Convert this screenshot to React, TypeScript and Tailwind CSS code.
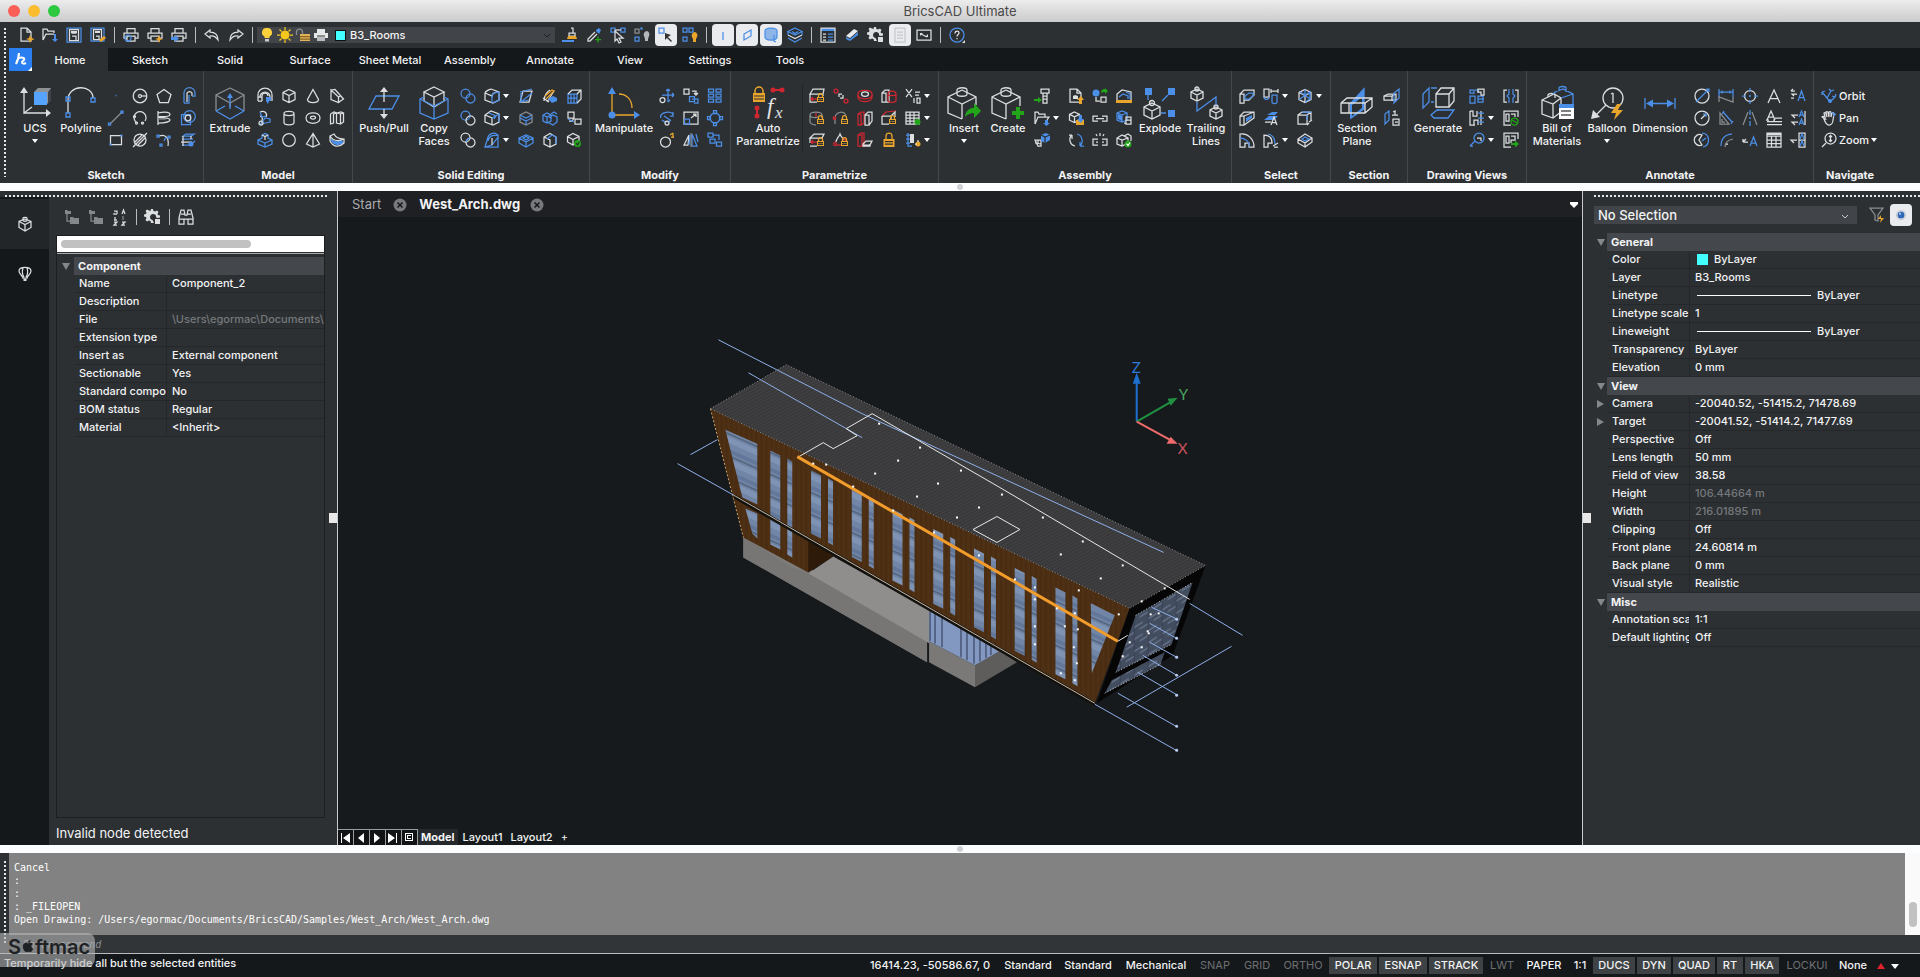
import React from 'react';
import { FaApple } from 'react-icons/fa';

type Shape = [color: string, d: string, fill?: boolean];

const W = '#dcdee0';
const B = '#4b8fe8';
const R = '#d02630';
const O = '#eaa62c';
const G = '#22a518';
const D = '#8b8e91';

const circ = (x: number, y: number, r: number) =>
  `M${x - r} ${y}a${r} ${r} 0 1 0 ${2 * r} 0a${r} ${r} 0 1 0 ${-2 * r} 0z`;
const rect = (x: number, y: number, w: number, h: number) => `M${x} ${y}h${w}v${h}h${-w}z`;

const CUBE = 'M8 1.5l6 3v7l-6 3-6-3v-7zM2 4.5l6 3 6-3M8 7.5v7';
const SMALL_CUBE = 'M6.500 2l5 2.400v5.800l-5 2.400-5-2.400V4.400zM1.500 4.400l5 2.400 5-2.400M6.500 6.800v5.800';
const PRINTER = 'M4 6V1.500h8V6M3.500 11H1V6h14v5h-2.500M4 9h8v5H4z';

const lock = (x: number, y: number): Shape[] => [
  [O, rect(x, y, 7, 5), true],
  [O, `M${x + 1.5} ${y}v-1.500a2 2 0 0 1 4 0v1.500`],
  ['#2d3033', `M${x + 1} ${y + 1.7}h5M${x + 1} ${y + 3.4}h5`],
];

const icons: Record<string, Shape[]> = {
  // sketch
  point: [['#3f5f95', circ(8, 7.5, 1), true]],
  line: [[D, 'M2 14L14 2'], [B, rect(0.5, 13, 2, 2)], [B, rect(13, 1, 2, 2)]],
  rectangle: [[W, 'M2.500 3.500h11v9h-11z'], [B, rect(12.5, 2.5, 2, 2), true], [B, rect(1.5, 11.5, 2, 2), true]],
  circle: [[W, circ(8, 8, 6.8)], [W, circ(8, 8, 1.5)], [W, 'M9.500 8H15']],
  arc: [[W, 'M4.500 12.500A6 6 0 1 1 13 11'], [W, circ(4.5, 13, 1)], [W, circ(10.5, 13, 1)], [W, circ(2.5, 6.5, 1)]],
  ellipse: [[W, circ(8, 8, 6)], [W, 'M1 15L15 1M3 10l7-7M6 13l7-7']],
  polygon: [[W, 'M8 1.500l7 5-2.700 8H3.700L1 6.500z']],
  helix: [[W, 'M2 1v14M2 3c9-2 12 0 12 1.500S11 7 4 6.500c-2 0-2 1 0 1 8 0 10 1 10 2.500S9 13 2 13'], [D, 'M2 9h8']],
  spline: [[W, 'M3 4c8-3 10 4 9 10'], [B, rect(1, 3, 2, 2)], [B, rect(4, 12, 2, 2)], [B, rect(12, 4, 2, 2)], [B, 'M8 9l2-4']],
  offset: [[W, 'M7 14V5a3 3 0 0 1 5 0v3'], [B, 'M4 15V5a5.500 5.500 0 0 1 11 0v3h-3M4 15h5V7']],
  boundary: [[B, 'M1.500 4.500h9v10h-9z'], [B, circ(9.5, 6.5, 5.8)], [W, circ(8, 8, 2.8)]],
  region: [[B, 'M3 4h8l3-2H6zM2 7h11M2 13h8l5-4'], [W, 'M3 4v10M11 4v3M1 10h11'], [B, circ(11, 12, 2.5), true]],
  // model
  revolve: [[W, 'M1 13V7a7 7 0 0 1 14 0v6M5 13V8a3 3 0 0 1 6 0M1 9h4M1 13h4'], [W, 'M3 9a5 5 0 0 1 10 0'], [B, 'M9 9h5v4h-2l-1 3-2-3z', true]],
  sweep: [[W, 'M3 2c4-2 8 1 6 5M3 6c3 0 3 3 1 8'], [B, 'M3 2l2 5 4-1M4 14l9-2V9L8 8z'], [W, circ(4, 13, 2)]],
  loft: [[B, 'M5 3l3-1.500L11 3v3l4 2v4l-7 3-7-3V8l4-2zM1 8l7 3 7-3M8 11v4'], [W, 'M5 3l3 1.500L11 3M8 4.500V8']],
  box: [[W, CUBE]],
  cylinder: [[W, 'M3 3.500v9c0 3 10 3 10 0v-9c0-2.700-10-2.700-10 0c0 2.700 10 2.700 10 0']],
  sphere: [[W, circ(8, 8, 6.3)]],
  cone: [[W, 'M8 1.500L2.500 11.500c0 4 11 4 11 0z']],
  torus: [[W, 'M1 8c0-7 14-7 14 0s-14 7-14 0z'], [W, 'M5.500 7.500c0-2 5-2 5 0s-5 2-5 0z']],
  pyramid: [[W, 'M8 1.500L1.500 12 8 15l6.500-3zM8 1.500V15']],
  wedge: [[W, 'M2 2v9.500l7.500 3V9zM2 2l4-.500L14.500 11l-5 3.500M9.500 9l2-1']],
  polysolid: [[W, 'M1.500 4v10l3-1V4l3-1v10l4 1V4l3-1v9l-3 2M1.500 4L5 2l3 1 4-1 2.500 1M11.500 4L8 3']],
  slab: [[B, 'M1 5c3 5 7 5 12 3l2 3c-5 3-10 3-13-2z', true], [W, 'M1 4l4-2c2 4 5 5 10 5v4c-5 5-11 4-14-2zM1 4c3 5 7 6 14 3']],
  // solid editing
  union: [[B, circ(5.5, 5.5, 4.5)], [B, circ(10.5, 10.5, 4.5)]],
  subtract: [[B, circ(5.5, 5.5, 4.5)], [W, circ(10.5, 10.5, 4.5)]],
  intersect: [[W, circ(5.5, 5.5, 4.5)], [W, circ(10.5, 10.5, 4.5)], [B, 'M6 10a5 5 0 0 1 4-4']],
  fillet: [[W, 'M1 5c0-1 4-4 6-4l8 3v8l-6 3-8-3zM1 5l7 3c0-3 4-4 7-4'], [B, 'M8 8v7M8 8c0-2 3-4 7-4v8l-6 3']],
  chamfer: [[W, 'M1 5l6-4 8 3v8l-6 3-8-3zM1 5l7 3v7'], [B, 'M5 3l7 3-2 3M8 8l7-4v8']],
  shell: [[B, 'M1 15L4 5c1-3 4-4 7-4l3 2v12H1zM4 9c1-5 4-6 10-6M1 15l7-2 6-8'], [W, 'M8 13V6']],
  taper: [[W, 'M2 14h9L14 3H5z'], [B, 'M2 4l12-3M3 5v9l11-9M2 14l9-2']],
  thicken: [[D, 'M2 5l6-3 6 3v7l-6 3-6-3z'], [B, 'M2 8l6 3 6-3M8 11v4M2 5l6 3 6-3']],
  imprint: [[B, 'M1 6l7-3 7 3v5l-7 4-7-4zM1 6l7 4 7-4M8 10v5'], [B, 'M5 6l3-1.500L11 6 8 8z']],
  slice: [[W, 'M2 13c0-6 4-10 6-11M5 14L12 3M1 10l6 4'], [O, 'M3 8l7-6 2 1-8 8'], [B, 'M6 11l5-3 4 2v3l-5 2z', true]],
  separate: [[B, 'M1 5l4-2 4 2v6l-4 2-4-2zM1 5l4 2 4-2M5 7v6M7 8l4-3 4 2v5l-4 3-4-2'], [B, 'M9 4l3-2 3 2']],
  solidCheck: [[W, 'M2 5l6-3.500 6 3.500v7l-6 3-6-3zM2 5l6 3v7'], [B, 'M5 7l5-4 4 2v7']],
  pattern: [[B, 'M2 6h9v9H2zM2 10h9M5 6v9M8 6v9'], [W, 'M2 6l4-4h9v9l-4 4M11 6l4-4']],
  copyEdge: [[W, 'M2 2h6v6H2zM9 9h6v5H9z'], [W, 'M3 11h3l2-3'], [B, 'M2 9l6 3']],
  cleanup: [[W, 'M1.500 4.500L7 1.500l6 3v5L7 13l-5.500-3zM1.500 4.500L7 7.500l6-3M7 7.500V13'], [G, circ(11.5, 11.5, 3.5), true], ['#2d3033', 'M10 11l1.500 2 2-3']],
  // modify
  move: [[B, 'M9 1v13M3 7h12M9 1L7 3M9 1l2 2M15 7l-2-2M15 7l-2 2M9 14l2-2'], [W, circ(3.5, 12, 2.5)]],
  rotate: [[B, 'M2 8c-3-6 12-8 12-3M14 2v4h-3M3 10c3 3 7 2 9 0'], [W, circ(8, 13, 2)], [B, 'M5 6l6 4']],
  scaleCircle: [[W, circ(6.5, 10, 5)], [O, 'M11 3l3-2M12 5h3M14 1v5']],
  copy: [[W, rect(1, 1, 5, 5)], [W, 'M9 3h4v3M11 5l2 2 2-2'], [B, rect(6.5, 8.5, 5, 5)], [B, 'M9 11h6v4h-4']],
  stretch: [[W, 'M1 2h14v12H1z'], [B, rect(1.5, 9, 5, 5)], [W, 'M8 8l5-4M10 4h3v3']],
  mirror: [[B, 'M9 2l5 12H9zM13 2l2 8'], [W, 'M6 3L1 13h4z'], [D, 'M8 1v14'], [B, 'M6 13L7 3']],
  array: [[B, rect(1.5, 1, 5, 3)], [B, rect(1.5, 6, 5, 3)], [B, rect(1.5, 11, 5, 3)], [B, rect(9, 1, 5, 3)], [B, rect(9, 6, 5, 3)], [B, rect(9, 11, 5, 3)]],
  polarArray: [[B, circ(8, 8, 5)], [B, rect(6.5, 0.5, 3, 3)], [B, rect(6.5, 12.5, 3, 3)], [B, rect(0.5, 6.5, 3, 3)], [B, rect(12.5, 6.5, 3, 3)]],
  pathArray: [[B, rect(1, 1, 5, 4)], [B, rect(3, 7, 5, 4)], [B, rect(9.5, 10, 5, 4)], [B, 'M6 3h6v5']],
  // parametrize
  fixLock: [[W, 'M1 6l3-5h11l-1 5H1zM1 6v8h7M14 6v2'], [R, 'M2 11h6M4 9l-2 2 2 2'], ...lock(8, 9)],
  coincident: [[R, circ(3, 3, 2)], [R, circ(13, 13, 2)], [W, 'M6 9V6h3M10 7v3H7']],
  concentric: [[R, 'M1 6c0-5 14-5 14 0v3c0 6-14 6-14 0z'], [R, 'M1 7c0 5 14 5 14 0'], [W, 'M4.500 6c0-3 7-3 7 0s-7 3-7 0z']],
  tangent: [[W, 'M1 5l3-3h4v12H1zM1 5h4v9'], [R, 'M7 6c0-4 8-4 8 0v6c0 3-8 3-8 0zM7 6c0 2 8 2 8 0']],
  radiusLock: [[D, 'M1 5c0-4 12-4 12 0v3M1 5v7c0 2 4 3 6 3M1 5c0 3 6 3 8 2'], [R, 'M7 3v4'], ...lock(8, 9)],
  arcLock: [[D, 'M2 14V8a6 6 0 0 1 11-3'], [R, rect(0.5, 7, 2, 2)], ...lock(8, 9)],
  parallel: [[R, 'M1 4l3-2h3v11l-3 2H1zM1 4h3v11'], [W, 'M8 5l3-3h4v9l-3 4H8zM8 5h4v10']],
  perpendicular: [[R, 'M1 6l4-4 10-1'], [W, 'M1 6h9v3M1 6v8h7M10 6l4-4v5'], ...lock(8, 9)],
  rigid: [[W, 'M1 6l4-4h10l-2 4H1zM1 14h7M1 11V6'], [R, 'M2 10h6M4 8l-2 2 2 2'], ...lock(8, 9)],
  angleLock: [[W, 'M3 10c0-3 3-5 4-8 1 3 3 4 4 6'], [R, circ(2, 12, 1.5)], [R, circ(11, 8, 1.5)], [R, 'M3 13h5'], ...lock(8, 9)],
  planar: [[R, 'M1 3l3-2h3v13H1zM1 3h4v11'], [W, 'M6 12l3-3h6l-2 4H6zM6 12v2h7v-2']],
  lockAll: [[O, rect(2.5, 7, 11, 8), true], [O, 'M5 7V4a3 3 0 0 1 6 0v3'], ['#2d3033', 'M4 9.500h8M4 12h8']],
  expression: [[W, 'M1 1l6 8M7 1L1 9M10 4h5M10 7h4M9 10v5M12 10h3v5h-3z']],
  dimTable: [[W, 'M1 2h13v12H1zM1 5h13M1 8h13M1 11h13M5 2v12M9 2v12'], [G, circ(12.5, 12, 3), true]],
  design: [[B, 'M3 1v13h4M1 3h4M1 7h4M1 11h4'], [W, rect(5, 2, 4, 9), true], [O, circ(13, 12, 2.5), true], [W, 'M13 8v2M10 12h2']],
  // assembly
  bolt: [[W, 'M7 1h8v4H7zM9 5v10h4V5M9 8h4M9 11h4'], [G, 'M0 11h4V9l4 3-4 3v-2H0z', true]],
  openComp: [[W, 'M1 14V2h3l1 2h6v3h4l-2 3M1 14l3-7h7'], [B, 'M11 10h3v3h2l-3.500 3-3.500-3h2z', true]],
  bringIn: [[W, 'M1 8h6v6H4zM1 11l6 1M4 8v3'], [B, 'M7 3l5-2 4 2v5l-5 3-4-2z', true], ['#2d3033', 'M7 3l4 2 5-2M11 5v6']],
  newComp: [[W, 'M2 1h7l4 4v9H2zM9 1v4h4'], [W, 'M5 8l2-1 3 1v3H5z', true], [O, 'M13 8l3 4h-2v4h-3v-4H9z', true]],
  updateComp: [[W, SMALL_CUBE], [O, rect(8, 10, 8, 5), true], [B, 'M11 5h3v4h2l-3.500 4L9 9h2z', true]],
  replace: [[B, 'M9 2c5 1 7 8 3 12M12 14v-4M12 14h4'], [W, 'M7 14C2 13 0 6 4 3M4 3v4M4 3H1']],
  insertTree: [[B, circ(4, 5, 3.5), true], [W, 'M4 9v4h4M9 9h5v5H9z'], [G, 'M9 5c0-4 3-4 4-4V0l3 3-3 3V4c-2 0-3 0-4 1z', true]],
  clip: [[W, 'M6 6H1v5h5M10 6h5v5h-5M4 8.500h8']],
  unlink: [[W, 'M6 7H1v6h5M10 7h5v6h-5M4 10h2M10 10h2M5 4L4 2M8 4V1M11 4l1-2']],
  library: [[W, 'M1 12V6l5-4 9 2v8'], [B, 'M3 9l4-3 5 2v3M10 4l4 2v5'], [O, rect(0, 12, 16, 3), true]],
  structure: [[B, 'M1 3l5-2 5 2v7l-5 2-5-2zM1 3l5 2v7M6 5l5-2'], [B, 'M2 4l4 2v5l-4-2z', true], [W, 'M10 7h5v7h-5zM10 10h5M8 13h2']],
  compCheck: [[W, 'M1 6l5-3 6 3v5l-6 3-5-2zM1 6l5 2 6-2M6 8v6M8 4l4-2 3 2v5'], [G, circ(12, 12, 3.5), true], ['#fff', 'M10.500 11.500l1.500 2 2-3']],
  // select
  selEdge: [[W, 'M1 6l4-4h10v5l-5 5H5v3H1zM1 6h4v9'], [B, 'M6 8l4-3h4v3l-4 3H6z']],
  selFace: [[W, 'M1 6l4-4h10v6L5 15H1zM1 6h4v9M5 6l10-4'], [B, 'M7 8l6-3v3L7 12z', true]],
  selArc: [[W, 'M1 2v13h5v-4h4v4h5C15 7 9 1 1 2z'], [B, 'M1 6c6 0 9 4 10 9']],
  selAlign: [[W, 'M1 1h5v8H1zM8 3h7M8 1v4M15 1v4'], [B, 'M9 7h5v7c0 2-5 2-5 0zM1 9c0 3 5 3 5 0']],
  selText: [[B, 'M1 10l5-4h9l-4 4zM4 5l5-3h6l-3 3', true], [W, 'M2 12h6M8 15l3-8 3 8M9 12.500h4']],
  selTan: [[W, 'M1 3v12h4v-4h4C9 6 6 3 1 3z'], [B, 'M5 2c5 1 7 5 7 10'], [W, 'M10 14l5-3M11 15h4']],
  selSolid: [[W, CUBE], [B, 'M8 1.500v6l6 4M2 11.500l6-4M3 4l5 3 5-3v7l-5 3']],
  selBody: [[W, 'M1 5l4-3h9v8M1 5h9v9H1zM10 5l4-3M12 12l3-2M10 15l2-2'], [B, 'M5 2h9M10 5v5']],
  selChain: [[W, 'M1 7l7-5 7 4v4l-7 5-7-4zM1 7l7 4 7-5M8 11v4'], [B, 'M5 7l3-2 4 2-4 2z']],
  // section
  sectBlock: [[W, 'M0 8l4-2h8v6H0zM0 8h8l4-2M8 8v5'], [B, 'M10 5l5-4v9l-5 5z']],
  sectExtract: [[B, 'M1 4l4-3v9l-4 4z'], [W, 'M9 2l2-1v4M8 5h6M9 9h6v6H9zM11 12h3']],
  // drawing views
  viewLayout: [[B, 'M1 2h4v3H1zM1 8h5v7H1zM9 8h5v6H9zM6 2h3v3'], [W, 'M9 1h6v6h-3V4H9z'], [B, 'M9 11h6']],
  viewSection: [[W, 'M1 1h3v5h4V1M1 1v14h5M1 15h4v-5h4v5M12 1v14'], [B, 'M9 3h6M9 8h6M9 12h6']],
  viewDetail: [[B, circ(10, 6, 5)], [B, 'M6 9l-5 5M1 14h3'], [W, 'M8 6h4v3']],
  viewBreak: [[W, 'M4 2H1v12h3M12 2h3v12h-3'], [B, 'M6 1v5l-2 2 2 2v5M10 1v5l2 2-2 2v5']],
  viewRefresh: [[W, 'M15 7V1H1v14h7M3 4h3v7H3zM8 4h4v3'], [G, circ(11.5, 11.5, 3.5)], [G, 'M9 10l5 3']],
  viewExport: [[W, 'M15 7V1H1v14h7M3 4h3v7H3zM8 4h4v4H8v3'], [G, 'M8 11h4V8.500l4 3.500-4 3.500V13H8z', true]],
  // annotate
  dimDia: [[W, circ(8, 8, 7)], [B, 'M2 14L15 1M12 1h3v3']],
  dimRad: [[W, circ(8, 8, 7)], [W, 'M7 9l5-5'], [B, 'M9 4h3v3']],
  dimJog: [[W, 'M8 3a5.500 5.500 0 1 0 0 10l-3-5z'], [B, 'M8 1c8 0 9 12 1 14M12 6l-4 3']],
  dimLin: [[B, 'M1 1v8M15 1v8M1 4h14M4 2.500v3M12 2.500v3'], [D, 'M1 14V9l14 5V9']],
  dimAng: [[D, 'M2 3v11h9zM4 9v3h3'], [B, 'M5 2l9 10M4 4l2-3M13 14l2-3']],
  dimArc: [[D, 'M7 15c0-5 3-7 8-8'], [B, 'M3 14C3 7 7 2 14 2'], [W, 'M8 12h2']],
  centerMark: [[W, circ(8, 8, 5.5)], [B, 'M8 0v4M8 12v4M0 8h4M12 8h4'], [B, circ(8, 8, 1), true]],
  centerLine: [[D, 'M1 15L6 2M15 15L10 2'], [B, 'M8 0v5M8 7v2M8 11v5']],
  leaderText: [[W, 'M1 10l3-3M1 10v-3M1 10h5'], [B, 'M8 14l3.500-9L15 14M9 11h5']],
  text: [[W, 'M2 15L8 2l6 13M4 10.500h8']],
  mtext: [[W, 'M1 10l4-9 4 9M2.500 7h5M9 8h7M1 11.500h15M1 14.500h15M0 10h3M7 10h2']],
  table: [[W, 'M1 1h14v14H1zM1 4h14M1 8h14M1 11.500h14M5.500 4v11M10 4v11'], [W, rect(1, 1, 14, 2), true]],
  leaderAdd: [[W, 'M5 3H1M1 3l2-2M7 6H2l2 2M1 10h3'], [B, 'M8 13l3.500-10L15 13M9.500 9.500h4']],
  leaderAlign: [[W, 'M8 5H2l3 3M8 12H2l3 3'], [B, 'M9 7l2.500-6L14 7M9 15l2.500-6L14 15M10 5h3M10 13h3'], [W, 'M15 1v14']],
  leaderBlock: [[W, 'M7 8H1l3 3M9 1h6v14H9zM9 8h6'], [B, 'M10 7l2-5 2 5M10 14l2-5 2 5']],
  // navigate
  orbit: [[B, 'M1 4l5 6 3 4 5-5M6 10l4-7M10 3L8 1M10 3l3-1M14 9l-3-1M14 9l1-3M1 4l3-1M1 4v3'], [B, circ(9, 13, 2), true]],
  pan: [[W, 'M4 9L1 7c0-1 2-1 3 0L3 3c1-1 2 0 2 1l1 3-1-5c1-1 2 0 2 1l1 4V2c1-1 2 0 2 1v4l1-4c1-1 2 0 2 1l-1 6c0 3-2 5-4 5-3 0-4-3-5-6z'], [B, 'M10 2l4 2M12 6l3-2']],
  zoom: [[W, circ(9.5, 6.5, 5.5)], [W, 'M5 11l-4 4M9.500 3.500v6M8 5l1.500-1.500L11 5M8 8l1.500 1.500L11 8']],
  // quick access
  newFile: [[W, 'M3 1h6l4 4v9H3zM9 1v4h4'], [O, 'M12 8l1.500 3 3 1-3 1.500L12 16l-1-3-3-1 3-1z', true]],
  open: [[W, 'M1 13V2h4l1 2h6v2M1 13l3-6h8'], [B, 'M12 7h2v5h2l-3 3-3-3h2z', true]],
  save: [[B, rect(1, 1, 14, 14)], [W, 'M3.500 2.500h9v11h-9zM5.500 6h5M6 9h4v4'], [W, rect(5, 4, 6, 2), true]],
  saveAs: [[B, rect(1, 1, 13, 13)], [W, 'M3.500 2.500h8v10h-8zM6 9h3v3'], [W, rect(5, 4, 5, 2), true], [O, 'M9 13l5-4 2 2-5 4z', true]],
  preview: [[W, PRINTER], [B, circ(5, 11, 3)]],
  print: [[W, PRINTER], [O, 'M12 8l1 3 3 1-3 1-1 3-1-3-3-1 3-1z', true]],
  publish: [[W, PRINTER], [B, 'M0 10h4V8l4 3.500L4 15v-2H0z', true]],
  undo: [[W, 'M6 3L1 7l5 4V9c4-1 6 1 8 4 0-5-3-8-8-8z']],
  redo: [[W, 'M10 3l5 4-5 4V9c-4-1-6 1-8 4 0-5 3-8 8-8z']],
  bulb: [['#ffd23c', 'M8 1a4.500 4.500 0 0 0-2.500 8.500V11h5V9.500A4.500 4.500 0 0 0 8 1z', true], ['#c9cdd0', rect(6, 12, 4, 2.5), true]],
  sun: [['#f6c81e', circ(8, 8, 4.5), true], ['#f6c81e', 'M8 0v3M8 13v3M0 8h3M13 8h3M2.500 2.500l2 2M11.500 11.500l2 2M13.500 2.500l-2 2M4.500 11.500l-2 2']],
  unlocked: [['#e2b35a', rect(5, 7, 10, 7), true], [D, 'M1.500 8V5a3 3 0 0 1 6 0v2'], ['#8a6420', 'M5 9.500h10M5 12h10']],
  plot: [['#e4e6e8', rect(1, 6, 14, 5), true], ['#e4e6e8', rect(4, 2, 8, 4), true], ['#b8bcc0', rect(4, 10, 8, 4), true], ['#555', 'M4 9h8']],
  brush: [[W, 'M9 1h2v5M7 6h6v3H7z'], [O, 'M6 9h8l1 3H5z', true], [B, 'M0 13h12v2H0z', true]],
  dropper: [[B, 'M10 3l3-2 2 2-2 4-3-3', true], [W, 'M9 5L2 12v2h2l7-7'], [G, 'M9 12.500h6M12 9.500v6']],
  selCursor: [[B, rect(1, 1, 4, 4)], [B, rect(11, 1, 4, 4)], [W, 'M5 4l8 7h-4l2 4-2 1-2-4-2 2z'], [W, 'M5 3h6']],
  selBulb: [[D, rect(1, 2, 4, 4)], [B, rect(1, 10, 4, 4)], [B, rect(7, 1, 1, 1)], ['#b4b7ba', 'M13 4a3.500 3.500 0 0 0-3 5l1 3v2h3v-2l1-3a3.500 3.500 0 0 0-2-5z', true]],
  pick: [[B, rect(1, 1, 5, 5)], ['#333', 'M7 6l6 2-3 2 4 4-1 1-4-4-2 2z', true]],
  quad: [[B, rect(1, 1, 4, 4)], [B, rect(7, 1, 4, 4)], [B, rect(1, 10, 4, 4)], [O, 'M13 5a3.500 3.500 0 0 0-3 5l1 2v3h3v-3l1-2a3.500 3.500 0 0 0-2-5z', true]],
  axisLine: [[B, 'M8 5v8']],
  facePick: [[B, 'M5 7l7-4v6l-7 4z']],
  bodyPick: [['#8db6e6', 'M2 4c0-4 12-4 12 0v6c0 4-12 4-12 0z', true], [B, 'M2 4c0-4 12-4 12 0v6c0 4-12 4-12 0zM11 8v6l2 1']],
  layers: [[B, 'M8 1l7 3.500L8 8 1 4.500z'], [W, 'M1 8l7 3.500L15 8'], [B, 'M1 11l7 4 7-4M5 4.500l3 2 3-2M1 8V5M15 8V5']],
  propsTable: [[B, rect(1, 1, 14, 3), true], [W, 'M1 1h14v14H1zM3 7h3M3 10h3M3 13h3'], [B, 'M8 7h5M8 10h5M8 13h5']],
  eraser: [['#e8eaec', 'M2 9l8-7 4 2-8 7z', true], [B, 'M2 10l4 2 8-7v3l-8 6-4-2z', true]],
  gear: [
    [W, 'M6 0h2l.500 2 1.500.500L12 1.500 13.500 3l-1 2 .500 1 2 .500v2l-2 .500L11 8.500A3 3 0 1 0 7.500 11L9 14H6l-.500-2L4 11.500 2 12.500 .5 11l1-2L1 8-1 7.500v-2L1 5l.500-1.500L.5 2 2 .5l2 1L5.500 2z', true],
    [W, rect(10, 10, 5, 5), true],
  ],
  sheet: [['#c4c8cc', 'M3 1h10v14H3zM5 5h6M5 8h6M5 11h6']],
  fullscreen: [[W, 'M1 3h14v10H1z'], [W, 'M4 9V6h3zM12 7v3H9z', true], [W, 'M5 7l6 3']],
  help: [[B, circ(8, 8, 7)], [W, 'M6 6.500c0-3 4-3 4-.500 0 1.500-2 1.500-2 3.500M8 11v1.200'], [W, 'M16 13v3h-3z', true]],
  // panels
  folderAdd: [['#85888b', 'M1 1h2l1 1h3v3H1zM6 8h3l1 1h5v6H6z', true], ['#85888b', 'M3 5v7h3']],
  sortAz: [[W, 'M2 2h3v3M2 4v1h3M10 5l1.500-4L13 5M3 8v3M2 11h3M2 13h3l-3 3h3M10 13h3l-3 3h3'], [D, 'M11 7v4']],
  binoculars: [[W, 'M1 9l2-8h3l1 5h2l1-5h3l2 8v6h-5v-5H6v5H1zM1 10h5M10 10h5M3 5h4M9 5h4']],
  comp: [[W, 'M8 3l6 2.500v6L8 15l-6-3.500v-6zM2 5.500L8 8.500l6-3M8 8.500V15'], [W, 'M6 4.500V2c0-1 4-1 4 0v2.500c0 1-4 1-4 0z']],
  balloon: [[W, 'M2 5c0-5 12-5 12 0 0 3-4 5-4 7H6c0-2-4-4-4-7zM6 2c-1 3-1 6 1 9M10 2c1 3 1 6-1 9'], [W, rect(6.5, 13, 3, 2), true]],
  filter: [[D, 'M1 1h13L9 8v6l-3-1V8z'], [O, 'M12 8l-3 4h3l-1 4 4-5h-3z', true]],
  eye: [['#2f66b5', circ(8, 8, 3.5), true], ['#9cc0ee', circ(7, 6.8, 1.2), true], ['#c3cad4', circ(8, 8, 4.5)]],
};

// large ribbon icons, 32 unit grid
const bigIcons: Record<string, Shape[]> = {
  ucs: [[W, 'M5 4v22l8-6M5 26h24'], [W, 'M5 0l-4 6h8zM32 26l-5-4v8z', true], ['#8f9294', 'M15 5l4-4h13v12l-4 4z', true], ['#3f444a', 'M29 5v12l3-4V1z', true], ['#55a3ff', rect(15, 5, 13, 13), true]],
  polyline: [[W, 'M3 26V13C3-3 28-3 28 11'], [B, rect(1, 26, 4, 4)], [B, rect(1, 10, 4, 4)], [B, rect(26, 11, 4, 4)]],
  extrude: [[D, 'M16 1l14 7v16M16 1L2 8v16M2 8l14 8 14-8M16 16v4'], [B, 'M2 24l14 8 14-8M2 24l9-5M30 24l-9-5M16 22V8'], [B, 'M16 6l-3 5h6z', true]],
  pushPull: [[B, 'M8 9h23l-7 13H1z'], [W, 'M16 4v11M16 22v6'], [W, 'M16 0l-4 5h8zM16 32l-4-5h8z', true]],
  copyFaces: [[W, 'M16 0l10 5-10 5L6 5zM6 5v9l10 6 10-6V5M16 10v9'], [B, 'M6 10l-4 2v14l14 6 14-6V12l-4-2M2 12l14 7 14-7M16 19v13']],
  manipulate: [[O, 'M4 27V5M4 28h24M11 7c7 0 13 5 13 14'], [B, 'M4 0L0 7h8zM32 28l-6-4v8z', true], [B, circ(4, 28, 3.5), true]],
  insert: [[W, 'M14 3l14 7v8M14 3L0 10v16l14 6M0 10l14 7 14-7M14 17v15'], [W, 'M9 7V3c0-3 10-3 10 0v4c0 3-10 3-10 0z'], [G, 'M17 30c1-8 6-9 9-9v-5l7 8-7 7v-5c-4 0-6 1-9 4z', true]],
  create: [[W, 'M14 3l14 7v9M14 3L0 10v16l14 6M0 10l14 7 14-7M14 17v15'], [W, 'M9 7V3c0-3 10-3 10 0v4c0 3-10 3-10 0z'], [G, 'M24 20h4v4h4v4h-4v4h-4v-4h-4v-4h4z', true]],
  explode: [[W, 'M8 16l8 4v8l-8 4-8-4v-8zM0 20l8 4 8-4M8 24v8'], [W, circ(8, 16, 2.5)], [B, rect(1, 1, 7, 7), true], [B, rect(24, 1, 7, 7), true], [B, rect(24, 23, 7, 7), true], [B, 'M4 8v5M24 8l-6 6M17 26h5']],
  trailing: [[W, 'M7 2l6 3v6l-6 3-6-3V5zM1 5l6 3 6-3M7 8v6M26 20l6 3v6l-6 3-6-3v-6zM20 23l6 3 6-3M26 26v6'], [W, circ(7, 2, 2)], [W, circ(26, 20, 2)], [B, 'M7 15v9l19-14v8']],
  section: [[B, 'M9 16v16l14-10V1z', true], ['#2d3033', 'M11 18l10-8v11l-10 8z', true], [B, 'M10 17v14l13-9V2z'], [W, 'M0 16l6-5h25v9l-7 6H0zM0 16h24l7-5M24 16v10'], [W, 'M8 16v10']],
  generate: [[W, rect(14, 7, 13, 13)], [W, 'M14 7l5-6h13v13l-5 6M27 7l5-6'], [B, 'M1 7l6-6v14l-6 6zM9 28l6-5h17l-6 8H12z'], [B, 'M9 1h6M9 15h3M16 22v2']],
  bom: [[W, 'M1 13l12-6 7 4v14l-8 6-11-4zM1 13l11 4 8-6M12 17v14'], [W, 'M7 10V8c0-2 7-2 7 0v3'], [B, 'M14 5l8-3 10 5v11M14 5l-2 2M32 7l-12 4M18 4V1c0-2 7-2 7 0v4'], ['#fff', rect(18, 17, 15, 15), true], [B, rect(18, 17, 15, 4), true], ['#555', 'M20 24h10M20 28h10']],
  balloon: [[W, circ(22, 11, 10)], [W, 'M22 6v10M20 7l2-1M15 18L5 28'], [W, 'M0 32l2-9 7 7z', true], [O, 'M26 17l-6 9h5l-2 7 9-10h-5l3-6z', true]],
  dimension: [[B, 'M1 11v11M31 11v11M5 16.500h22'], [B, 'M2 16.500l7-4v8zM30 16.500l-7-4v8z', true]],
};

const Icon: React.FC<{ name: string; big?: boolean }> = ({ name, big }) => (
  <svg
    viewBox={big ? '0 0 32 32' : '0 0 16 16'}
    className={big ? 'size-8 shrink-0 overflow-visible' : 'size-4 shrink-0 overflow-visible'}
    strokeWidth={big ? 1.3 : 1.25}
    aria-hidden="true"
  >
    {(big ? bigIcons : icons)[name].map(([color, d, fill], i) => (
      <path key={i} d={d} stroke={fill ? 'none' : color} fill={fill ? color : 'none'} />
    ))}
  </svg>
);

const Caret = () => (
  <svg viewBox="0 0 6 4" className="h-1 w-1.5" fill="#fff" aria-hidden="true">
    <path d="M0 0h6L3 4z" />
  </svg>
);

const Grip: React.FC<{ vertical?: boolean }> = ({ vertical }) => (
  <div
    className={
      vertical
        ? 'w-0.5 shrink-0 bg-[repeating-linear-gradient(180deg,#e4e6e8_0_2px,transparent_2px_4px)]'
        : 'h-0.5 shrink-0 bg-[repeating-linear-gradient(90deg,#e4e6e8_0_2px,transparent_2px_4px)]'
    }
  />
);

const ToolButton: React.FC<{ name: string; active?: boolean }> = ({ name, active }) => (
  <button aria-label={name} className="flex h-6 w-6 shrink-0 items-center justify-center">
    <span className={active ? 'flex h-[22px] w-[22px] items-center justify-center rounded-sm bg-[#e9ebee]' : 'flex'}>
      <Icon name={name} />
    </span>
  </button>
);

const Separator = () => <div className="mx-1 h-4 w-px shrink-0 bg-[#b9bbbd]" />;

const BigButton: React.FC<{ name: string; lines: string[]; width: string; caret?: boolean }> = ({
  name,
  lines,
  width,
  caret,
}) => (
  <button className={`flex flex-col items-center pt-0.5 text-[11px] leading-[13px] font-medium ${width}`}>
    {name === 'autoParam' ? (
      <svg viewBox="0 0 32 32" className="size-8 overflow-visible" aria-hidden="true">
        <path d="M1 6h12v9H1z" fill={O} />
        <path d="M3 6V4a4 4 0 0 1 8 0v2" stroke={O} strokeWidth="1.5" fill="none" />
        <path d="M2 9h10M2 12h10" stroke="#2d3033" />
        <path d="M22 3h8M5 22v8" stroke={R} strokeWidth="2" />
        {[[21, 3], [30, 3], [5, 21], [5, 29]].map(([x, y]) => (
          <circle key={`${x}-${y}`} cx={x} cy={y} r="2.500" fill={R} />
        ))}
        <text x="15" y="27" fontSize="23" fontStyle="italic" fill="#e2e3e4" fontFamily="Liberation Serif, serif">
          f
        </text>
        <text x="23" y="31" fontSize="17" fontStyle="italic" fill="#e2e3e4" fontFamily="Liberation Serif, serif">
          x
        </text>
      </svg>
    ) : (
      <Icon name={name} big />
    )}
    <span className="mt-[3px]">
      {lines.map((line) => (
        <span key={line} className="block whitespace-nowrap">
          {line}
        </span>
      ))}
    </span>
    {caret && (
      <span className="mt-1">
        <Caret />
      </span>
    )}
  </button>
);

// A column holds up to three small buttons; a leading "+" marks a drop-down arrow
const Column: React.FC<{ items: string[] }> = ({ items }) => {
  const wide = items.some((item) => item.startsWith('+'));
  return (
    <div className={wide ? 'w-[34px]' : 'w-6'}>
      {items.map((item) => {
        const name = item.replace('+', '');
        return (
          <button key={name} aria-label={name} className="flex h-[22px] items-center gap-[3px] pl-1">
            <Icon name={name} />
            {item.startsWith('+') && <Caret />}
          </button>
        );
      })}
    </div>
  );
};

const Group: React.FC<{ title: string; children: React.ReactNode; last?: boolean }> = ({ title, children, last }) => (
  <section className={`flex shrink-0 flex-col px-[3px] ${last ? '' : 'border-r border-[#45484b]'}`}>
    <div className="flex flex-1 pt-3.5">{children}</div>
    <h2 className="h-4 text-center text-[11px] leading-4 font-bold">{title}</h2>
  </section>
);

const Ribbon = () => (
  <div className="flex h-28 shrink-0 bg-[#2d3033]">
    <Group title="Sketch">
      <BigButton name="ucs" lines={['UCS']} width="w-[46px]" caret />
      <BigButton name="polyline" lines={['Polyline']} width="w-[46px]" />
      <Column items={['point', 'line', 'rectangle']} />
      <Column items={['circle', 'arc', 'ellipse']} />
      <Column items={['polygon', 'helix', 'spline']} />
      <Column items={['offset', 'boundary', 'region']} />
    </Group>
    <Group title="Model">
      <BigButton name="extrude" lines={['Extrude']} width="w-[46px]" />
      <Column items={['revolve', 'sweep', 'loft']} />
      <Column items={['box', 'cylinder', 'sphere']} />
      <Column items={['cone', 'torus', 'pyramid']} />
      <Column items={['wedge', 'polysolid', 'slab']} />
    </Group>
    <Group title="Solid Editing">
      <BigButton name="pushPull" lines={['Push/Pull']} width="w-[56px]" />
      <BigButton name="copyFaces" lines={['Copy', 'Faces']} width="w-[44px]" />
      <Column items={['union', 'subtract', 'intersect']} />
      <Column items={['+fillet', '+chamfer', '+shell']} />
      <Column items={['taper', 'thicken', 'imprint']} />
      <Column items={['slice', 'separate', 'solidCheck']} />
      <Column items={['pattern', 'copyEdge', 'cleanup']} />
    </Group>
    <Group title="Modify">
      <BigButton name="manipulate" lines={['Manipulate']} width="w-[62px]" />
      <Column items={['move', 'rotate', 'scaleCircle']} />
      <Column items={['copy', 'stretch', 'mirror']} />
      <Column items={['array', 'polarArray', 'pathArray']} />
    </Group>
    <Group title="Parametrize">
      <BigButton name="autoParam" lines={['Auto', 'Parametrize']} width="w-[68px]" />
      <div className="mr-0.5 h-[66px] w-px bg-[#212427]" />
      <Column items={['fixLock', 'radiusLock', 'rigid']} />
      <Column items={['coincident', 'arcLock', 'angleLock']} />
      <Column items={['concentric', 'parallel', 'planar']} />
      <Column items={['tangent', 'perpendicular', 'lockAll']} />
      <Column items={['+expression', '+dimTable', '+design']} />
    </Group>
    <Group title="Assembly">
      <BigButton name="insert" lines={['Insert']} width="w-[44px]" caret />
      <BigButton name="create" lines={['Create']} width="w-[44px]" />
      <Column items={['bolt', '+openComp', 'bringIn']} />
      <Column items={['newComp', 'updateComp', 'replace']} />
      <Column items={['insertTree', 'clip', 'unlink']} />
      <Column items={['library', 'structure', 'compCheck']} />
      <BigButton name="explode" lines={['Explode']} width="w-[48px]" />
      <BigButton name="trailing" lines={['Trailing', 'Lines']} width="w-[44px]" />
    </Group>
    <Group title="Select">
      <Column items={['selEdge', 'selFace', 'selArc']} />
      <Column items={['+selAlign', 'selText', '+selTan']} />
      <Column items={['+selSolid', 'selBody', 'selChain']} />
    </Group>
    <Group title="Section">
      <BigButton name="section" lines={['Section', 'Plane']} width="w-[46px]" />
      <Column items={['sectBlock', 'sectExtract']} />
    </Group>
    <Group title="Drawing Views">
      <BigButton name="generate" lines={['Generate']} width="w-[54px]" />
      <Column items={['viewLayout', '+viewSection', '+viewDetail']} />
      <Column items={['viewBreak', 'viewRefresh', 'viewExport']} />
    </Group>
    <Group title="Annotate">
      <BigButton name="bom" lines={['Bill of', 'Materials']} width="w-[54px]" />
      <BigButton name="balloon" lines={['Balloon']} width="w-[46px]" caret />
      <BigButton name="dimension" lines={['Dimension']} width="w-[60px]" />
      <Column items={['dimDia', 'dimRad', 'dimJog']} />
      <Column items={['dimLin', 'dimAng', 'dimArc']} />
      <Column items={['centerMark', 'centerLine', 'leaderText']} />
      <Column items={['text', 'mtext', 'table']} />
      <Column items={['leaderAdd', 'leaderAlign', 'leaderBlock']} />
    </Group>
    <Group title="Navigate" last>
      <div className="pr-1.5 text-[11px] font-medium">
        {['Orbit', 'Pan', 'Zoom'].map((label) => (
          <button key={label} className="flex h-[22px] items-center gap-0.5 pl-1">
            <Icon name={label.toLowerCase()} />
            {label}
            {label === 'Zoom' && <Caret />}
          </button>
        ))}
      </div>
    </Group>
  </div>
);

const QuickAccess = () => (
  <div className="flex h-[26px] shrink-0 items-center bg-[#2d3033] pl-[5px]">
    <ToolButton name="newFile" />
    <ToolButton name="open" />
    <ToolButton name="save" />
    <ToolButton name="saveAs" />
    <Separator />
    <ToolButton name="preview" />
    <ToolButton name="print" />
    <ToolButton name="publish" />
    <Separator />
    <ToolButton name="undo" />
    <ToolButton name="redo" />
    <Separator />
    <div className="flex h-4 w-[298px] items-center bg-[#414448]">
      <span className="flex gap-0.5 pl-0.5">
        <Icon name="bulb" />
        <Icon name="sun" />
        <Icon name="unlocked" />
        <Icon name="plot" />
      </span>
      <span className="ml-1.5 size-[11px] shrink-0 border border-[#111] bg-[#4ff]" />
      <div className="relative flex-1">
        <select
          aria-label="Layer"
          className="block h-4 w-full appearance-none bg-transparent pl-1 text-[11px] leading-[15px] font-medium"
        >
          <option>B3_Rooms</option>
        </select>
        <svg viewBox="0 0 8 5" className="pointer-events-none absolute top-1.5 right-1 w-2" aria-hidden="true">
          <path d="M1 1l3 3 3-3" stroke="#1d1f21" fill="none" />
        </svg>
      </div>
    </div>
    <span className="w-[3px]" />
    <ToolButton name="brush" />
    <ToolButton name="dropper" />
    <ToolButton name="selCursor" />
    <ToolButton name="selBulb" />
    <ToolButton name="pick" active />
    <ToolButton name="quad" />
    <Separator />
    <ToolButton name="axisLine" active />
    <ToolButton name="facePick" active />
    <ToolButton name="bodyPick" active />
    <ToolButton name="layers" />
    <Separator />
    <ToolButton name="propsTable" />
    <ToolButton name="eraser" />
    <ToolButton name="gear" />
    <ToolButton name="sheet" active />
    <ToolButton name="fullscreen" />
    <Separator />
    <ToolButton name="help" />
  </div>
);

const TABS = ['Home', 'Sketch', 'Solid', 'Surface', 'Sheet Metal', 'Assembly', 'Annotate', 'View', 'Settings', 'Tools'];

const RibbonTabs = () => (
  <nav className="flex h-[23px] shrink-0 gap-1 bg-[#15181b] text-[11px] font-medium">
    <button aria-label="BricsCAD" className="-mr-1 flex w-[23px] items-center justify-center bg-[#2b7ef0]">
      <svg viewBox="0 0 23 23" className="size-[23px]" aria-hidden="true">
        <path d="M10 5c0 3-1 7-3 11" stroke="#fff" strokeWidth="2.200" fill="none" />
        <path d="M10 10c4-1 6 0 5 2-1 1-2 1-2 2 0 2 2 2 4 1" stroke="#fff" strokeWidth="2" fill="none" />
        <path d="M23 19v4h-4z" fill="#fff" />
      </svg>
    </button>
    {TABS.map((tab) => (
      <button key={tab} className={`w-[76px] pt-0.5 whitespace-nowrap ${tab === 'Home' ? 'bg-[#2d3033]' : ''}`}>
        {tab}
      </button>
    ))}
  </nav>
);

type Row = { label: string; value?: React.ReactNode; dim?: boolean; expand?: boolean };

const PropertyTable: React.FC<{ title: string; rows: Row[]; columns: [string, string] }> = ({
  title,
  rows,
  columns,
}) => (
  <table className="w-full table-fixed border-separate border-spacing-0 text-[11px] leading-[17px] font-medium">
    <colgroup>
      <col className={columns[0]} />
      <col className={columns[1]} />
      <col />
    </colgroup>
    <thead>
      <tr className="h-[18px]">
        <th className="p-0">
          <button aria-label={`Collapse ${title}`} className="flex w-full justify-center">
            <svg viewBox="0 0 8 7" className="w-2" fill="#85888b" aria-hidden="true">
              <path d="M0 0h8L4 7z" />
            </svg>
          </button>
        </th>
        <th colSpan={2} className="bg-[#44474b] px-1 py-0 text-left font-bold">
          {title}
        </th>
      </tr>
    </thead>
    <tbody>
      {rows.map((row) => (
        <tr key={row.label} className="h-[18px]">
          <td className="p-0">
            {row.expand && (
              <button aria-label={`Expand ${row.label}`} className="flex w-full justify-center">
                <svg viewBox="0 0 7 8" className="w-[7px]" fill="#85888b" aria-hidden="true">
                  <path d="M0 0l7 4-7 4z" />
                </svg>
              </button>
            )}
          </td>
          <td className="overflow-hidden border-r border-b border-[#25282a] py-0 pr-0 pl-[5px] whitespace-nowrap">
            {row.label}
          </td>
          <td
            className={`overflow-hidden border-b border-[#25282a] py-0 pr-0 pl-[5px] whitespace-nowrap ${row.dim ? 'text-[#75787b]' : ''}`}
          >
            {row.value}
          </td>
        </tr>
      ))}
    </tbody>
  </table>
);

const ByLayerLine = () => (
  <span className="flex items-center gap-1.5 pl-0.5">
    <span className="h-px w-[114px] bg-white" />
    ByLayer
  </span>
);

const COMPONENT_ROWS: Row[] = [
  { label: 'Name', value: 'Component_2' },
  { label: 'Description' },
  { label: 'File', value: '\\Users\\egormac\\Documents\\', dim: true },
  { label: 'Extension type' },
  { label: 'Insert as', value: 'External component' },
  { label: 'Sectionable', value: 'Yes' },
  { label: 'Standard component', value: 'No' },
  { label: 'BOM status', value: 'Regular' },
  { label: 'Material', value: '<Inherit>' },
];

const GENERAL_ROWS: Row[] = [
  {
    label: 'Color',
    value: (
      <span className="flex items-center gap-1.5 pl-0.5">
        <span className="size-[11px] bg-[#4ff]" />
        ByLayer
      </span>
    ),
  },
  { label: 'Layer', value: 'B3_Rooms' },
  { label: 'Linetype', value: <ByLayerLine /> },
  { label: 'Linetype scale', value: '1' },
  { label: 'Lineweight', value: <ByLayerLine /> },
  { label: 'Transparency', value: 'ByLayer' },
  { label: 'Elevation', value: '0 mm' },
];

const VIEW_ROWS: Row[] = [
  { label: 'Camera', value: '-20040.52, -51415.2, 71478.69', expand: true },
  { label: 'Target', value: '-20041.52, -51414.2, 71477.69', expand: true },
  { label: 'Perspective', value: 'Off' },
  { label: 'Lens length', value: '50 mm' },
  { label: 'Field of view', value: '38.58' },
  { label: 'Height', value: '106.44664 m', dim: true },
  { label: 'Width', value: '216.01895 m', dim: true },
  { label: 'Clipping', value: 'Off' },
  { label: 'Front plane', value: '24.60814 m' },
  { label: 'Back plane', value: '0 mm' },
  { label: 'Visual style', value: 'Realistic' },
];

const MISC_ROWS: Row[] = [
  { label: 'Annotation scale', value: '1:1' },
  { label: 'Default lighting', value: 'Off' },
];

const LeftPanel = () => (
  <aside className="relative flex w-[338px] shrink-0 flex-col border-r border-[#c8cacc] bg-[#2d3033] pt-1">
    <div className="mr-2 ml-[5px]">
      <Grip />
    </div>
    <div className="flex min-h-0 flex-1">
      <nav className="w-[49px] shrink-0 bg-[#15181b] pt-0.5">
        <button aria-label="Components" className="flex h-[50px] w-full items-center justify-center bg-[#232629]">
          <Icon name="comp" />
        </button>
        <button aria-label="Mechanical browser" className="flex h-[50px] w-full items-center justify-center">
          <Icon name="balloon" />
        </button>
      </nav>
      <div className="flex min-w-0 flex-1 flex-col pr-3 pl-[7px]">
        <div className="flex h-[38px] items-center pt-0.5 pl-1">
          <ToolButton name="folderAdd" />
          <ToolButton name="folderAdd" />
          <ToolButton name="sortAz" />
          <Separator />
          <ToolButton name="gear" />
          <Separator />
          <ToolButton name="binoculars" />
        </div>
        <div className="min-h-0 flex-1 border border-[#1c1e20]">
          <div className="flex h-4 items-center bg-white pl-1">
            <div className="h-2 w-[190px] rounded-full bg-[#c1c1c1]" />
          </div>
          <div className="mb-[3px] h-0.5 border-b border-[#aaa]" />
          <PropertyTable title="Component" rows={COMPONENT_ROWS} columns={['w-[17px]', 'w-[93px]']} />
        </div>
        <p className="h-[27px] text-[13px] leading-[30px]">Invalid node detected</p>
      </div>
    </div>
    <span className="absolute top-[322px] right-0 h-2.5 w-2 bg-[#e8e8e8]" />
  </aside>
);

const RightPanel = () => (
  <aside className="relative flex w-[338px] shrink-0 flex-col border-l border-[#c8cacc] bg-[#2d3033] pt-1 pl-[11px]">
    <Grip />
    <div className="flex h-9 items-center gap-2 pr-[7px]">
      <div className="relative min-w-0 flex-1">
        <select
          aria-label="Selection"
          className="block h-[18px] w-full appearance-none bg-[#414448] pl-1 text-[13px] leading-[18px] font-medium"
        >
          <option>No Selection</option>
        </select>
        <svg viewBox="0 0 8 5" className="pointer-events-none absolute top-2 right-2 w-2" aria-hidden="true">
          <path d="M1 1l3 3 3-3" stroke="#ccc" fill="none" />
        </svg>
      </div>
      <div className="flex items-center">
        <ToolButton name="filter" />
        <ToolButton name="eye" active />
      </div>
    </div>
    <PropertyTable title="General" rows={GENERAL_ROWS} columns={['w-[13px]', 'w-[83px]']} />
    <PropertyTable title="View" rows={VIEW_ROWS} columns={['w-[13px]', 'w-[83px]']} />
    <PropertyTable title="Misc" rows={MISC_ROWS} columns={['w-[13px]', 'w-[83px]']} />
    <span className="absolute top-[322px] left-0 h-2.5 w-2 bg-[#e8e8e8]" />
  </aside>
);

const BAYS = [0, 1, 2, 3, 4, 5, 6, 7];
const bayBottom = (i: number, x: number) => (i === 0 ? 549 : 488 + 0.576 * (x - 734));

const ROOF_DOTS = [
  [812, 462], [825, 463], [852, 485], [878, 422], [897, 459], [874, 472], [916, 495], [919, 446], [937, 482], [956, 516],
  [960, 469], [978, 506], [978, 554], [1001, 493], [1042, 516], [1060, 553], [1082, 540], [1100, 577],
  [1122, 564], [1078, 589], [1164, 587], [1141, 600], [1118, 613], [892, 509], [933, 531], [1014, 578], [1034, 586],
];

const FACADE_DOTS = [
  [1034, 598], [1034, 625], [1034, 643], [1056, 607], [1064, 625], [1074, 612], [1077, 628], [1073, 646], [1076, 662],
  [1074, 679], [1060, 672], [1148, 632], [1129, 641], [1141, 646], [1158, 612], [1147, 630], [1122, 655], [1150, 613],
];

const CONSTRUCTION_LINES = [
  'M718 339L862 413 1164 552', 'M748 372L862 437', 'M690 454l27-15', 'M677 463l57 32', 'M1190 603l53 32',
  'M1127 707l105-61', 'M1152 607l26 12', 'M1150 623l27 15', 'M1150 642l27 15', 'M1143 655l34 20', 'M1138 672l40 23',
  'M1118 693l60 34', 'M1095 704l83 47',
];

const Building = () => (
  <svg viewBox="338 216 1244 613" className="absolute inset-0 size-full" role="img" aria-label="West_Arch model">
    <defs>
      <pattern id="roof" width="4" height="3" patternUnits="userSpaceOnUse" patternTransform="rotate(-28)">
        <rect width="4" height="3" fill="#363637" />
        <path d="M0 1h4" stroke="#48484a" />
      </pattern>
      <pattern id="wood" width="5" height="8" patternUnits="userSpaceOnUse">
        <rect width="5" height="8" fill="#4e3014" />
        <path d="M1 0v8" stroke="#43280f" />
      </pattern>
      <pattern id="glass" width="60" height="22" patternUnits="userSpaceOnUse" patternTransform="skewY(24)">
        <rect width="60" height="22" fill="#7186a6" />
        <path d="M0 5h60" stroke="#7f94b4" strokeWidth="6" />
        <path d="M0 16h60" stroke="#62779a" strokeWidth="4" />
        <path d="M0 21h60" stroke="#3f4b60" />
      </pattern>
      <pattern id="endGlass" width="14" height="12" patternUnits="userSpaceOnUse" patternTransform="skewY(-32)">
        <rect width="14" height="12" fill="#434d60" />
        <path d="M0 4h9M6 9h8" stroke="#5f6b80" strokeWidth="2" />
        <path d="M0 0v12" stroke="#2b3140" />
      </pattern>
    </defs>

    {/* plinth */}
    <path d="M743 536L743 557 927 662 927 640 833 580z" fill="#7d7c7a" />
    <path d="M808 573L833 556 930 610 929 643z" fill="#8f8e8d" />
    <path d="M790 566L808 573 927 642V662L743 557V536z" fill="#777674" />
    <path d="M929 641l46 24v22l-46-25z" fill="#7a7977" />
    <path d="M975 665l24-15 18 12-42 25z" fill="#5e5d5b" />
    <path d="M929 609l70 42-24 14-46-24z" fill="#8398c0" />
    {[930, 935, 942, 961, 967, 974, 980, 986, 991].map((x) => (
      <path
        key={x}
        d={`M${x} ${609 + (x - 929) * 0.58}V${x < 975 ? 640 + (x - 929) * 0.52 : 664 - (x - 975) * 0.58}`}
        stroke="#29344f"
      />
    ))}

    {/* roof and facade */}
    <path d="M710 408L786 364 1206 565 1130 608z" fill="url(#roof)" />
    <path d="M710 408L1130 608 1095 703 833 552 808 572 743 537z" fill="url(#wood)" />
    <path d="M808 541L834 555 808 572z" fill="#2e1a09" />
    <path d="M725 429L757 443V504L742 497z" fill="url(#glass)" />
    <path d="M745 508L757 513V538L752 533z" fill="url(#glass)" />
    {BAYS.map((i) => {
      const x = 770 + i * 40.8;
      const top = 450 + i * 19.6;
      return (
        <g key={i} fill="url(#glass)">
          <path d={`M${x} ${top}l10 5V${bayBottom(i, x + 10)}l-10-5z`} />
          <path d={`M${x + 17} ${top + 8}l5 3V${bayBottom(i, x + 22) + (i === 0 ? 8 : 0)}l-5-3z`} />
        </g>
      );
    })}
    <path d="M1091 603l24 12-23 58z" fill="url(#glass)" />

    {/* end wall */}
    <path d="M1130 608L1206 565 1173 655 1097 703z" fill="#070606" />
    <path d="M1136 615L1193 582 1172 644 1116 672z" fill="url(#endGlass)" />
    <path d="M1112 680L1165 652 1161 664 1105 693z" fill="url(#endGlass)" />

    {/* outlines */}
    <path d="M710 408L786 364 1206 565 1130 608z" fill="none" stroke="#8d8f92" strokeDasharray="1 2" />
    <path d="M1136 615L1193 582M1116 672L1172 644M1105 693L1161 664" fill="none" stroke="#b9bdc4" strokeDasharray="1 2" />
    <path d="M710 408L743 537" fill="none" stroke="#c9a470" strokeDasharray="2 2" />
    <path d="M734 496L1095 704" stroke="#15120e" strokeWidth="4" />
    <path d="M734 495L1095 703" stroke="#c2bcae" />
    <g fill="none" stroke="#8fb0ea">
      {CONSTRUCTION_LINES.map((d) => (
        <path key={d} d={d} />
      ))}
    </g>
    <g fill="none" stroke="#e6e8ea">
      <path d="M797 457L823 442 833 448 857 435 846 428 872 413 1000 487 1190 599" />
      <path d="M973 529L997 516 1020 529 997 542z" />
      <path d="M1118 641l10-6" />
    </g>
    <path d="M797 456L1118 641" stroke="#f29c2c" strokeWidth="3" />
    {[...ROOF_DOTS, ...FACADE_DOTS].map(([x, y]) => (
      <rect key={`${x}-${y}`} x={x} y={y} width="2" height="2" fill="#fff" />
    ))}
    {[[1177, 619], [1177, 638], [1177, 657], [1177, 675], [1177, 695], [1177, 726], [1177, 750]].map(([x, y]) => (
      <circle key={y} cx={x} cy={y} r="1.500" fill="#b8ccf2" />
    ))}

    {/* ucs axes */}
    <g strokeWidth="2" fontFamily="Lato, sans-serif" fontSize="15">
      <path d="M1137 421V380" stroke="#1f6fd0" />
      <path d="M1137 372l-4 11h8z" fill="#1f6fd0" />
      <path d="M1137 421l33-19" stroke="#1f9140" />
      <path d="M1178 397l-10 1 3 7z" fill="#1f9140" />
      <path d="M1137 421l33 18" stroke="#ef6b6b" />
      <path d="M1178 443l-7-7-4 7z" fill="#ef6b6b" />
      <text x="1132" y="372" fill="#2f79d8">Z</text>
      <text x="1179" y="399" fill="#4ba765">Y</text>
      <text x="1178" y="453" fill="#c8525c">X</text>
    </g>
  </svg>
);

const CloseIcon = () => (
  <svg viewBox="0 0 14 14" className="size-3.5" aria-hidden="true">
    <circle cx="7" cy="7" r="6.500" fill="#77797c" />
    <path d="M4.500 4.500l5 5M9.500 4.500l-5 5" stroke="#15181b" strokeWidth="1.500" />
  </svg>
);

const NAV_ARROWS: [string, string][] = [
  ['First layout', 'M3 2v10h1V2zM12 2v10L5 7z'],
  ['Previous layout', 'M10 2v10L4 7z'],
  ['Next layout', 'M4 2v10l6-5z'],
  ['Last layout', 'M2 2v10l7-5zM10 2v10h1V2z'],
  ['Layout list', 'M3 2h8v8H3zM4 3v6h6V3zM5 4h4v1H6v2h3v1H5z'],
];

const Drawing = () => (
  <main className="flex min-w-0 flex-1 flex-col bg-[#171a1c]">
    <div className="flex h-[26px] shrink-0 items-center bg-[#1e2023] pt-0.5 pr-1 pl-3.5 text-[13px]">
      <button className="text-[#a9abad]">Start</button>
      <button aria-label="Close Start" className="ml-3">
        <CloseIcon />
      </button>
      <button className="ml-3 font-bold">West_Arch.dwg</button>
      <button aria-label="Close West_Arch.dwg" className="ml-2.5">
        <CloseIcon />
      </button>
      <button aria-label="Open documents" className="ml-auto">
        <svg viewBox="0 0 8 6" className="w-2" fill="#fff" aria-hidden="true">
          <path d="M0 0h8v2L4 6 0 2z" />
        </svg>
      </button>
    </div>
    <div className="relative min-h-0 flex-1">
      <Building />
    </div>
    <div className="flex h-4 w-fit shrink-0 items-stretch bg-[#26292b] text-[11px] leading-4">
      {NAV_ARROWS.map(([label, d]) => (
        <button key={label} aria-label={label} className="w-4 border-t border-r border-[#9a9c9e] bg-[#111315]">
          <svg viewBox="0 0 14 14" className="size-3.5" fill="#fff" fillRule="evenodd" aria-hidden="true">
            <path d={d} />
          </svg>
        </button>
      ))}
      <button className="pr-1 pl-[3px] font-bold">Model</button>
      <button className="bg-[#171a1c] px-1 font-medium">Layout1</button>
      <button className="bg-[#171a1c] px-1 font-medium">Layout2</button>
      <button className="bg-[#171a1c] px-1">+</button>
    </div>
  </main>
);

const Splitter = () => (
  <div className="flex h-2 shrink-0 items-start justify-center bg-[#fcfdff]">
    <span className="mt-px size-1.5 rounded-full bg-[#cfd1d6]" />
  </div>
);

const Command = () => (
  <section className="flex shrink-0 bg-[#2d3033]">
    <div className="flex w-[9px] shrink-0 justify-center py-2">
      <Grip vertical />
    </div>
    <div className="min-w-0 flex-1">
      <div className="flex h-[82px] bg-[#828282]">
        <pre className="flex-1 overflow-hidden py-2 pl-[5px] font-['DejaVu_Sans_Mono',monospace] text-[10px] leading-[13px] text-white">
          {`Cancel
:
:
: _FILEOPEN
Open Drawing: /Users/egormac/Documents/BricsCAD/Samples/West_Arch/West_Arch.dwg`}
        </pre>
        <div className="w-[15px] bg-[#fafafa] pt-[49px]">
          <div className="mx-auto h-[25px] w-2 rounded-full bg-[#c1c1c1]" />
        </div>
      </div>
      <input
        aria-label="Command line"
        placeholder=": Enter command"
        className="block h-[18px] w-full bg-[#323538] pl-[2px] font-['DejaVu_Sans_Mono',monospace] text-[10px] italic placeholder:text-[#8d8f92]"
      />
    </div>
  </section>
);

const STATUS: [string, string, ('on' | 'off')?][] = [
  ['16414.23, -50586.67, 0', 'w-[134px]'],
  ['Standard', 'w-[58px]'],
  ['Standard ', 'w-[58px]'],
  ['Mechanical', 'w-[74px]'],
  ['SNAP', 'w-10', 'off'],
  ['GRID', 'w-10', 'off'],
  ['ORTHO', 'w-12', 'off'],
  ['POLAR', 'w-12', 'on'],
  ['ESNAP', 'w-12', 'on'],
  ['STRACK', 'w-[54px]', 'on'],
  ['LWT', 'w-[34px]', 'off'],
  ['PAPER', 'w-[46px]'],
  ['1:1', 'w-[22px]'],
  ['DUCS', 'w-[42px]', 'on'],
  ['DYN', 'w-[34px]', 'on'],
  ['QUAD', 'w-[42px]', 'on'],
  ['RT', 'w-[26px]', 'on'],
  ['HKA', 'w-[34px]', 'on'],
  ['LOCKUI', 'w-[52px]', 'off'],
  ['None', 'w-9'],
];

const statusStyle = {
  on: 'bg-[#3f4245] font-medium',
  off: 'text-[#6d7073]',
  plain: 'font-medium',
};

const StatusBar = () => (
  <footer className="flex h-6 shrink-0 items-center gap-0.5 border-t border-[#b9bbbd] bg-[#15181b] pr-[13px] text-[11px]">
    <span className="flex-1 pb-1 pl-1 font-medium">Temporarily hide all but the selected entities</span>
    {STATUS.map(([label, width, state]) => (
      <button
        key={label}
        className={`h-[17px] shrink-0 text-center leading-[17px] whitespace-nowrap ${width} ${statusStyle[state ?? 'plain']}`}
      >
        {label}
      </button>
    ))}
    <svg viewBox="0 0 30 8" className="ml-1 h-2 w-[30px]" aria-hidden="true">
      <path d="M4 1l4 6H0z" fill="#e0222a" />
      <path d="M14 2h8l-4 5z" fill="#fff" />
    </svg>
  </footer>
);

const Watermark = () => (
  <div className="absolute bottom-2.5 left-0 flex h-[34px] w-[95px] items-start rounded-tr-lg rounded-br-lg bg-[#b4b6b8]/60 pt-0.5 pl-2 text-[20px] leading-6 font-semibold text-[#1f2225]">
    S<FaApple className="mt-1 size-3.5" />
    ftmac
  </div>
);

const App: React.FC = () => {
  return (
    <div className="relative flex h-screen flex-col overflow-hidden bg-[#2d3033] font-[Inter,sans-serif] text-[#f2f3f4]">
      <header className="relative flex h-[22px] shrink-0 items-center justify-center bg-gradient-to-b from-[#ececec] to-[#cbcbcb] text-[13px] text-[#4a4a4a]">
        <div className="absolute left-2 flex gap-2">
          <button aria-label="Close" className="size-3 rounded-full bg-[#f95e57]" />
          <button aria-label="Minimize" className="size-3 rounded-full bg-[#fbbc2e]" />
          <button aria-label="Zoom window" className="size-3 rounded-full bg-[#2bc840]" />
        </div>
        <h1 className="pt-0.5">BricsCAD Ultimate</h1>
      </header>
      <div className="flex shrink-0">
        <div className="flex w-[9px] shrink-0 justify-center py-1.5">
          <Grip vertical />
        </div>
        <div className="min-w-0 flex-1">
          <QuickAccess />
          <RibbonTabs />
          <Ribbon />
        </div>
      </div>
      <Splitter />
      <div className="flex min-h-0 flex-1">
        <LeftPanel />
        <Drawing />
        <RightPanel />
      </div>
      <Splitter />
      <Command />
      <StatusBar />
      <Watermark />
    </div>
  );
};

export default App;
